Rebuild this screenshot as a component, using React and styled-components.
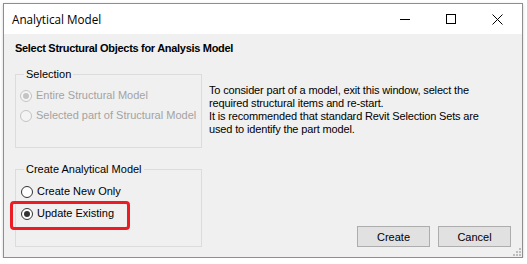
import React from 'react';
import styled, { createGlobalStyle } from 'styled-components';

const Global = createGlobalStyle`
  html, body { margin: 0; padding: 0; background: #ffffff; }
  body { font-family: "Liberation Sans", Arial, sans-serif; font-size: 11px; color: #000; }
`;

const Window = styled.div`
  position: relative;
  margin: 3px 0 0 3px;
  width: 520px;
  height: 255px;
  box-sizing: border-box;
  border: 1px solid #8e8e8e;
  background: #f0f0f0;
  display: flex;
  flex-direction: column;
  box-shadow: 0 1px 3px rgba(0, 0, 0, 0.18);
`;

const TitleBar = styled.div`
  height: 30px;
  background: #ffffff;
  display: flex;
  align-items: center;
  padding: 0 2px 0 8px;
`;

const Title = styled.div`
  flex: 1;
  font-family: "Open Sans", "Noto Sans", sans-serif;
  font-size: 11.7px;
  color: #000;
`;

const Caption = styled.div`
  width: 46px;
  height: 30px;
  display: flex;
  align-items: center;
  justify-content: center;
`;

const Body = styled.div`
  flex: 1;
  display: flex;
  flex-direction: column;
  padding: 8px 11px 10px 11px;
`;

const Heading = styled.div`
  font-weight: bold;
  font-size: 11px;
  line-height: 13px;
  letter-spacing: -0.3px;
`;

const Content = styled.div`
  flex: 1;
  display: flex;
  gap: 7px;
  margin-top: 13px;
`;

const LeftColumn = styled.div`
  width: 187px;
  display: flex;
  flex-direction: column;
  gap: 15px;
`;

const Group = styled.fieldset`
  margin: 0;
  padding: ${p => p.top}px 4px 0 4px;
  border: 1px solid #dcdcdc;
  height: ${p => p.h}px;
  box-sizing: border-box;
  display: flex;
  flex-direction: column;
  gap: ${p => p.gap}px;
`;

const Legend = styled.legend`
  padding: 0 2px;
  margin-left: 4px;
  font-size: 11px;
  line-height: 13px;
  color: #000;
`;

const RadioRow = styled.label`
  position: relative;
  display: flex;
  align-items: center;
  gap: 4px;
  font-size: 11px;
  line-height: 13px;
  color: ${p => (p.disabled ? '#a3a3a3' : '#000')};
  padding-left: ${p => p.indent}px;

  ${p => p.highlighted && `
    &::after {
      content: '';
      position: absolute;
      left: -10px;
      top: -6px;
      width: 120px;
      height: 29px;
      box-sizing: border-box;
      border: 3px solid #ec1c24;
      border-radius: 4px;
    }
  `}
`;

const Circle = styled.span`
  width: 12px;
  height: 12px;
  box-sizing: border-box;
  border-radius: 50%;
  border: 1px solid ${p => (p.disabled ? '#c4c4c4' : '#333333')};
  background: ${p => (p.disabled ? '#f4f4f4' : '#ffffff')};
  display: flex;
  align-items: center;
  justify-content: center;

  &::before {
    content: '';
    width: 6px;
    height: 6px;
    border-radius: 50%;
    background: ${p => (p.checked ? (p.disabled ? '#c4c4c4' : '#333333') : 'transparent')};
  }
`;

const RightColumn = styled.div`
  flex: 1;
  display: flex;
  flex-direction: column;
  justify-content: space-between;
`;

const Note = styled.p`
  margin: 16px 0 0 0;
  font-size: 11px;
  line-height: 13px;
  letter-spacing: -0.15px;
`;

const Buttons = styled.div`
  display: flex;
  justify-content: flex-end;
  gap: 8px;
`;

const Button = styled.button`
  width: 73px;
  height: 21px;
  box-sizing: border-box;
  border: 1px solid #adadad;
  background: #e1e1e1;
  font-family: "Liberation Sans", Arial, sans-serif;
  font-size: 11px;
  color: #000;
  padding: 0;
`;

const Grip = styled.svg`
  position: absolute;
  right: 1px;
  bottom: 1px;
`;

function Radio({ label, checked, disabled, indent, highlighted }) {
  return (
    <RadioRow disabled={disabled} indent={indent} highlighted={highlighted}>
      <Circle checked={checked} disabled={disabled} />
      {label}
    </RadioRow>
  );
}

export default function App() {
  return (
    <>
      <Global />
      <Window>
        <TitleBar>
          <Title>Analytical Model</Title>
          <Caption>
            <svg width="10" height="10" viewBox="0 0 10 10">
              <line x1="0" y1="5.5" x2="10" y2="5.5" stroke="#000" strokeWidth="1" />
            </svg>
          </Caption>
          <Caption>
            <svg width="10" height="10" viewBox="0 0 10 10">
              <rect x="0.5" y="0.5" width="9" height="9" fill="none" stroke="#000" strokeWidth="1" />
            </svg>
          </Caption>
          <Caption>
            <svg width="11" height="11" viewBox="0 0 11 11">
              <path d="M0.5 0.5 L10.5 10.5 M10.5 0.5 L0.5 10.5" stroke="#000" strokeWidth="1" />
            </svg>
          </Caption>
        </TitleBar>
        <Body>
          <Heading>Select Structural Objects for Analysis Model</Heading>
          <Content>
            <LeftColumn>
              <Group h={80} gap={7} top={8}>
                <Legend>Selection</Legend>
                <Radio label="Entire Structural Model" checked disabled indent={0} />
                <Radio label="Selected part of Structural Model" disabled indent={0} />
              </Group>
              <Group h={84} gap={9} top={9}>
                <Legend>Create Analytical Model</Legend>
                <Radio label="Create New Only" indent={1} />
                <Radio label="Update Existing" checked indent={1} highlighted />
              </Group>
            </LeftColumn>
            <RightColumn>
              <Note>
                To consider part of a model, exit this window, select the<br />
                required structural items and re-start.<br />
                It is recommended that standard Revit Selection Sets are<br />
                used to identify the part model.
              </Note>
              <Buttons>
                <Button>Create</Button>
                <Button>Cancel</Button>
              </Buttons>
            </RightColumn>
          </Content>
        </Body>
        <Grip width="8" height="8" viewBox="0 0 8 8">
          <rect x="6" y="0" width="2" height="2" fill="#bdbdbd" />
          <rect x="3" y="3" width="2" height="2" fill="#bdbdbd" />
          <rect x="6" y="3" width="2" height="2" fill="#bdbdbd" />
          <rect x="0" y="6" width="2" height="2" fill="#bdbdbd" />
          <rect x="3" y="6" width="2" height="2" fill="#bdbdbd" />
          <rect x="6" y="6" width="2" height="2" fill="#bdbdbd" />
        </Grip>
      </Window>
    </>
  );
}
